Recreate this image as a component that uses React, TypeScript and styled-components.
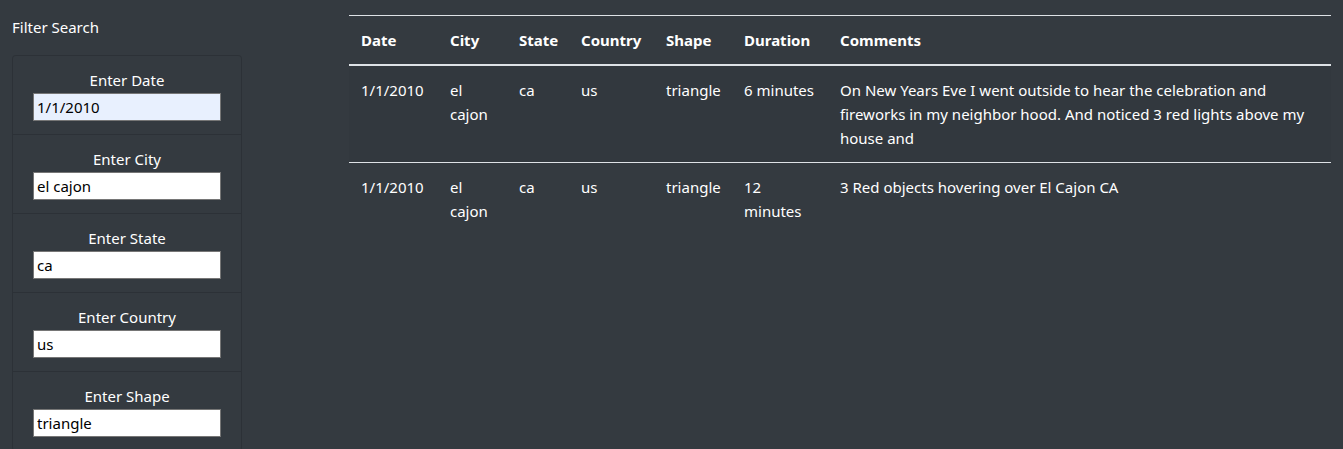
import React from "react"
import styled, { createGlobalStyle } from "styled-components"

type Sighting = {
  date: string
  city: string
  state: string
  country: string
  shape: string
  duration: string
  comments: string
}

const filters = [
  { label: "Enter Date", value: "1/1/2010", autofill: true },
  { label: "Enter City", value: "el cajon" },
  { label: "Enter State", value: "ca" },
  { label: "Enter Country", value: "us" },
  { label: "Enter Shape", value: "triangle" },
]

const sightings: Sighting[] = [
  {
    date: "1/1/2010",
    city: "el cajon",
    state: "ca",
    country: "us",
    shape: "triangle",
    duration: "6 minutes",
    comments:
      "On New Years Eve I went outside to hear the celebration and fireworks in my neighbor hood. And noticed 3 red lights above my house and",
  },
  {
    date: "1/1/2010",
    city: "el cajon",
    state: "ca",
    country: "us",
    shape: "triangle",
    duration: "12 minutes",
    comments: "3 Red objects hovering over El Cajon CA",
  },
]

const columns = [
  { title: "Date", width: 89 },
  { title: "City", width: 69 },
  { title: "State", width: 62 },
  { title: "Country", width: 85 },
  { title: "Shape", width: 78 },
  { title: "Duration", width: 96 },
  { title: "Comments", width: 503 },
]

const App = () => {
  return (
    <>
      <GlobalStyle />
      <Page>
        <Sidebar>
          <SidebarTitle>Filter Search</SidebarTitle>
          <FilterList>
            {filters.map((f) => (
              <FilterItem key={f.label}>
                <FilterLabel>{f.label}</FilterLabel>
                <FilterInput
                  type="text"
                  defaultValue={f.value}
                  $autofill={!!f.autofill}
                />
              </FilterItem>
            ))}
          </FilterList>
        </Sidebar>
        <TableWrapper>
          <Table>
            <colgroup>
              {columns.map((c) => (
                <col key={c.title} style={{ width: c.width }} />
              ))}
            </colgroup>
            <thead>
              <tr>
                {columns.map((c) => (
                  <Th key={c.title}>{c.title}</Th>
                ))}
              </tr>
            </thead>
            <tbody>
              {sightings.map((s, i) => (
                <Row key={i} $striped={i % 2 === 0}>
                  <Td>{s.date}</Td>
                  <Td>{s.city}</Td>
                  <Td>{s.state}</Td>
                  <Td>{s.country}</Td>
                  <Td>{s.shape}</Td>
                  <Td>{s.duration}</Td>
                  <Td>{s.comments}</Td>
                </Row>
              ))}
            </tbody>
          </Table>
        </TableWrapper>
      </Page>
    </>
  )
}

export default App

const GlobalStyle = createGlobalStyle`
  html, body {
    margin: 0;
    padding: 0;
    background: #343a40;
  }
  body {
    font-family: "Noto Sans", "Open Sans", sans-serif;
    font-size: 15px;
    line-height: 24px;
    color: #ffffff;
  }
`

const Page = styled.div`
  display: flex;
  align-items: flex-start;
  gap: 107px;
  min-height: 449px;
  padding: 15px 12px 0;
  box-sizing: border-box;
`

const Sidebar = styled.div`
  display: flex;
  flex-direction: column;
  width: 230px;
  flex-shrink: 0;
`

const SidebarTitle = styled.div`
  height: 24px;
  margin-bottom: 16px;
  font-size: 15px;
  line-height: 24px;
`

const FilterList = styled.ul`
  margin: 0;
  padding: 0;
  list-style: none;
  border: 1px solid rgba(0, 0, 0, 0.14);
  border-radius: 4px;
  border-bottom: none;
`

const FilterItem = styled.li`
  display: flex;
  flex-direction: column;
  align-items: center;
  padding: 12px 20px 13px;
  border-bottom: 1px solid rgba(0, 0, 0, 0.14);
`

const FilterLabel = styled.label`
  font-size: 15px;
  line-height: 24px;
  color: #ffffff;
`

const FilterInput = styled.input<{ $autofill: boolean }>`
  box-sizing: border-box;
  width: 188px;
  height: 28px;
  margin: 1px 0 0;
  padding: 1px 3px;
  border: 1px solid #767676;
  border-radius: 0;
  background: ${(p) => (p.$autofill ? "#e8f0fe" : "#ffffff")};
  font-family: "Noto Sans", "Open Sans", sans-serif;
  font-size: 15px;
  color: #000000;
  outline: none;
`

const TableWrapper = styled.div`
  flex: 1;
`

const Table = styled.table`
  width: 100%;
  table-layout: fixed;
  border-collapse: collapse;
  color: #ffffff;
`

const Th = styled.th`
  padding: 12px;
  text-align: left;
  vertical-align: bottom;
  font-weight: 700;
  line-height: 24px;
  border-top: 1px solid #dee2e6;
  border-bottom: 2px solid #dee2e6;
`

const Row = styled.tr<{ $striped: boolean }>`
  background: ${(p) => (p.$striped ? "rgba(0, 0, 0, 0.03)" : "transparent")};
`

const Td = styled.td`
  padding: 12px;
  vertical-align: top;
  line-height: 24px;
  border-top: 1px solid #dee2e6;
`
